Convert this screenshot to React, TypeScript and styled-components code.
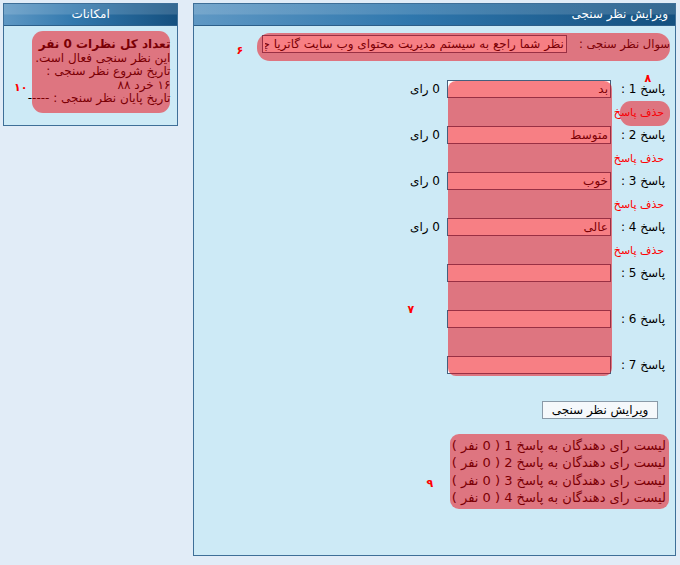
import React from 'react';
import styled, {createGlobalStyle} from "styled-components";

const GlobalStyle = createGlobalStyle`
  body {
    margin: 0;
    background: #e1ecf7;
    font-family: "DejaVu Sans", Tahoma, sans-serif;
    font-size: 12px;
    color: #000;
  }
`

type AnswerType = {
    title: string,
    value: string,
    votes?: string
}

const answers: AnswerType[] = [
    {title: 'پاسخ 1 :', value: 'بد', votes: '0 رای'},
    {title: 'پاسخ 2 :', value: 'متوسط', votes: '0 رای'},
    {title: 'پاسخ 3 :', value: 'خوب', votes: '0 رای'},
    {title: 'پاسخ 4 :', value: 'عالی', votes: '0 رای'},
    {title: 'پاسخ 5 :', value: ''},
    {title: 'پاسخ 6 :', value: ''},
    {title: 'پاسخ 7 :', value: ''},
]

const Panel = (props: { title: string, width: number, height: number, children: React.ReactNode }) => {
    return (
        <StyledPanel $width={props.width} $height={props.height}>
            <PanelHeader>{props.title}</PanelHeader>
            <PanelBody>{props.children}</PanelBody>
        </StyledPanel>
    );
};

export default function App() {
    return (
        <Page dir="rtl">
            <GlobalStyle/>
            <Panel title="ویرایش نظر سنجی" width={485} height={551}>
                <QuestionRow>
                    <Label>سوال نظر سنجی :</Label>
                    <TextInput $width={305} readOnly
                               value="نظر شما راجع به سیستم مدیریت محتوای وب سایت گاتریا چگونا است؟"/>
                </QuestionRow>

                <Answers>
                    {answers.map((a) => (
                        <AnswerBlock key={a.title}>
                            <AnswerRow>
                                <AnswerLabel>{a.title}</AnswerLabel>
                                <TextInput $width={164} readOnly value={a.value}/>
                                {a.votes && <Votes>{a.votes}</Votes>}
                            </AnswerRow>
                            <DeleteLine>{a.votes && <DeleteLink href="#">حذف پاسخ</DeleteLink>}</DeleteLine>
                        </AnswerBlock>
                    ))}
                </Answers>

                <ButtonRow>
                    <Button>ویرایش نظر سنجی</Button>
                </ButtonRow>

                <VoterList>
                    {[1, 2, 3, 4].map((n) => (
                        <VoterLink key={n} href="#">لیست رای دهندگان به پاسخ {n} ( 0 نفر )</VoterLink>
                    ))}
                </VoterList>

                <Highlight $left={63} $top={7} $width={413} $height={28} $radius={13}/>
                <Highlight $left={254} $top={55} $width={164} $height={295} $radius={8}/>
                <Highlight $left={426} $top={75} $width={50} $height={25} $radius={11}/>
                <Highlight $left={256} $top={408} $width={219} $height={75} $radius={9}/>
                <Marker $left={42} $top={18}>۶</Marker>
                <Marker $left={450} $top={46}>۸</Marker>
                <Marker $left={213} $top={277}>۷</Marker>
                <Marker $left={232} $top={451}>۹</Marker>
            </Panel>

            <Panel title="امکانات" width={175} height={121}>
                <Features>
                    <strong>تعداد کل نظرات 0 نفر</strong>
                    <span>این نظر سنجی فعال است.</span>
                    <span>تاریخ شروع نظر سنجی :</span>
                    <span>۱۶ خرد ۸۸</span>
                    <span>تاریخ پایان نظر سنجی : -----</span>
                </Features>
                <Highlight $left={28} $top={5} $width={138} $height={82} $radius={11}/>
                <Marker $left={10} $top={55}>۱۰</Marker>
            </Panel>
        </Page>
    );
}

const Page = styled.div`
  display: flex;
  align-items: flex-start;
  gap: 15px;
  padding: 3px 4px 0 3px;
`

const StyledPanel = styled.div<{ $width: number, $height: number }>`
  width: ${p => p.$width}px;
  height: ${p => p.$height}px;
  display: flex;
  flex-direction: column;
  border: 1px solid #3e6f98;
  background: #cdeaf6;
`

const PanelHeader = styled.div`
  height: 21px;
  line-height: 21px;
  padding: 0 7px;
  color: #fff;
  font-size: 12px;
  background: linear-gradient(180deg, rgba(255, 255, 255, 0.14) 0, rgba(255, 255, 255, 0.14) 48%, rgba(0, 0, 0, 0) 52%),
  linear-gradient(270deg, #14507f 0, #2f77ad 55%, #5f98c4 100%);

  ${StyledPanel}:last-child & {
    text-align: center;
    background: linear-gradient(180deg, rgba(255, 255, 255, 0.14) 0, rgba(255, 255, 255, 0.14) 48%, rgba(0, 0, 0, 0) 52%),
    linear-gradient(270deg, #15507f 0, #3279ae 60%, #5f98c4 100%);
  }
`

const PanelBody = styled.div`
  position: relative;
  flex: 1;
  border-top: 1px solid #2c5f8a;
`

const QuestionRow = styled.div`
  display: flex;
  align-items: center;
  gap: 12px;
  padding: 9px 5px 0 0;
`

const Label = styled.span`
  white-space: nowrap;
  font-size: 11.5px;
`

const TextInput = styled.input<{ $width: number }>`
  box-sizing: border-box;
  width: ${p => p.$width}px;
  height: 18px;
  margin: 0;
  padding: 0 2px;
  border: 1px solid #43607e;
  background: #fff;
  font-family: inherit;
  font-size: 12px;
  color: #000;
  direction: rtl;
  outline: none;
`

const Answers = styled.div`
  display: flex;
  flex-direction: column;
  padding-top: 27px;
`

const AnswerBlock = styled.div`
  display: flex;
  flex-direction: column;
  height: 46px;
`

const AnswerRow = styled.div`
  display: flex;
  align-items: center;
  height: 18px;
`

const AnswerLabel = styled.span`
  box-sizing: border-box;
  width: 64px;
  padding-right: 10px;
  white-space: nowrap;
`

const Votes = styled.span`
  margin-right: 7px;
  white-space: nowrap;
`

const DeleteLine = styled.div`
  height: 28px;
  line-height: 28px;
  padding-right: 11px;
`

const DeleteLink = styled.a`
  color: #ff0000;
  font-size: 11px;
  text-decoration: none;
`

const ButtonRow = styled.div`
  padding: 0 17px 0 0;
  margin-top: -1px;
`

const Button = styled.button`
  box-sizing: border-box;
  width: 116px;
  height: 18px;
  padding: 0;
  border: 1px solid #8a9aa8;
  background: #f5f8fb;
  font-family: inherit;
  font-size: 12px;
  color: #000;
`

const VoterList = styled.div`
  display: flex;
  flex-direction: column;
  align-items: flex-start;
  padding: 18px 9px 0 0;
`

const VoterLink = styled.a`
  color: #000;
  font-size: 13px;
  line-height: 17.4px;
  text-decoration: none;
  white-space: nowrap;
`

const Features = styled.div`
  display: flex;
  flex-direction: column;
  align-items: flex-start;
  padding: 12px 7px 0 0;
  line-height: 13.5px;
  font-size: 12px;
  white-space: nowrap;

  strong {
    font-size: 12px;
  }
`

const Highlight = styled.div<{ $left: number, $top: number, $width: number, $height: number, $radius: number }>`
  position: absolute;
  left: ${p => p.$left}px;
  top: ${p => p.$top}px;
  width: ${p => p.$width}px;
  height: ${p => p.$height}px;
  border-radius: ${p => p.$radius}px;
  background: rgba(240, 0, 10, 0.5);
  pointer-events: none;
`

const Marker = styled.span`
  position: absolute;
  left: ${(p: { $left: number, $top: number }) => p.$left}px;
  top: ${(p: { $left: number, $top: number }) => p.$top}px;
  color: #ff0000;
  font-size: 11px;
  font-weight: bold;
`
